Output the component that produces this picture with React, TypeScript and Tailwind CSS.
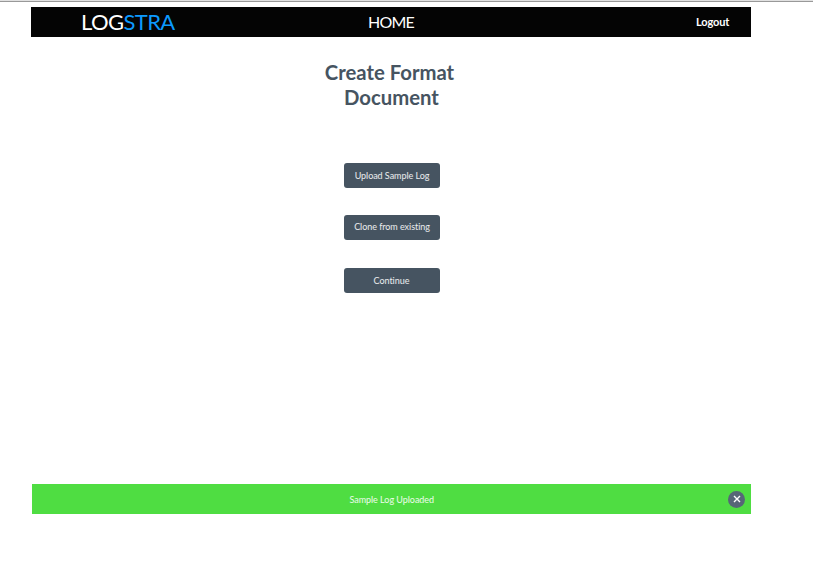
const buttonStyle = "h-[25px] w-[96px] rounded-[3px] bg-[#465461] text-[9px] tracking-[-0.05px] text-white/90";

export default function App() {
  return (
    <div className="h-[570px] w-[813px] overflow-hidden border-t border-[#e1e1e1] bg-white font-['Lato',sans-serif] [font-variant-ligatures:none]">
      <div className="h-px bg-[#999999]" />
      <div className="ml-[31px] mt-[5px] flex w-[720px] flex-col">
        <header className="flex h-[30px] items-center bg-[#040404] text-white">
          <div className="ml-[50px] w-[287px] text-[22px] leading-[30px] tracking-[-0.6px]">LOG<span className="text-[#0c9aff]">STRA</span></div>
          <a className="w-[328px] text-[16px] leading-[30px] tracking-[-0.8px]">HOME</a>
          <a className="text-[11px] font-bold leading-[28px] tracking-[-0.15px]">Logout</a>
        </header>
        <main className="flex h-[447px] flex-col items-center">
          <h1 className="mt-[22.5px] w-[160px] text-center text-[20.3px] font-bold leading-[25px] text-[#465461]"><span className="mr-[3px]">Create Format</span><span className="block pl-px">Document</span></h1>
          <div className="mt-[53.5px] flex w-full flex-col items-center pl-[2px]">
            <button className={buttonStyle}>Upload Sample Log</button>
            <button className={`mt-[27px] pb-px ${buttonStyle}`}>Clone from existing</button>
            <button className={`mr-px mt-[28px] ${buttonStyle}`}>Continue</button>
          </div>
        </main>
        <footer className="ml-[0.5px] grid h-[30px] grid-cols-[1fr_auto_1fr] items-center bg-[#4fdd42] text-[9px] text-white/90">
          <span />
          <span className="pl-px leading-[13px] tracking-[-0.04px]">Sample Log Uploaded</span>
          <button aria-label="Close" className="mr-[6px] flex size-[17px] items-center justify-center justify-self-end rounded-full bg-[#566677]">
            <svg viewBox="0 0 8 8" className="size-[8px]" stroke="white" strokeWidth="1.4"><path d="M1 1 7 7M7 1 1 7" /></svg>
          </button>
        </footer>
      </div>
    </div>
  );
}
